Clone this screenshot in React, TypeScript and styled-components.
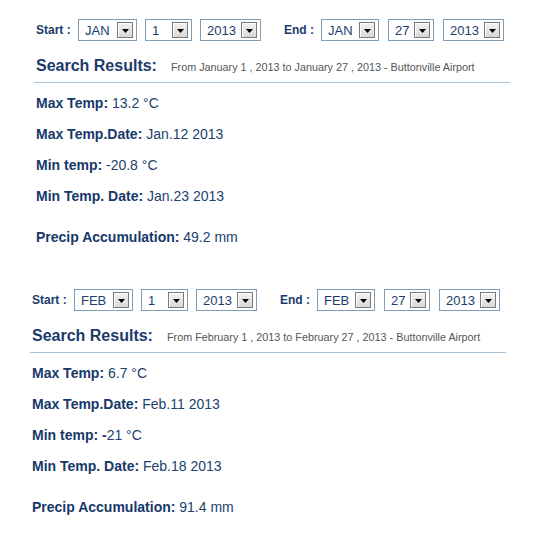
import React from "react";
import styled, { createGlobalStyle } from "styled-components";

const GlobalStyle = createGlobalStyle`
  html, body { margin: 0; padding: 0; background: #ffffff; }
  body { font-family: "Liberation Sans", Arial, Helvetica, sans-serif; }
`;

const Page = styled.div`
  padding-top: 19px;
  width: 534px;
  min-height: 544px;
  box-sizing: border-box;
`;

const Panel = styled.section<{ $left: number }>`
  margin-left: ${(p) => p.$left}px;
  & + & { margin-top: 43px; }
`;

const DateRow = styled.div`
  display: flex;
  align-items: center;
  height: 22px;
`;

const Group = styled.div<{ $gap: number; $ml?: number }>`
  display: flex;
  align-items: center;
  gap: ${(p) => p.$gap}px;
  margin-left: ${(p) => p.$ml ?? 0}px;
`;

const FieldLabel = styled.span<{ $w: number }>`
  width: ${(p) => p.$w}px;
  font-size: 12px;
  font-weight: bold;
  color: #1b3a6b;
  white-space: pre;
`;

const SelectBox = styled.div<{ $w: number }>`
  width: ${(p) => p.$w}px;
  height: 22px;
  box-sizing: border-box;
  border: 1px solid #7f9db9;
  display: flex;
  align-items: center;
  justify-content: space-between;
  padding: 0 3px 0 6px;
  font-size: 13px;
  color: #1c3d6d;
  background: #fff;
`;

const ArrowBtn = styled.span`
  width: 16px;
  height: 16px;
  box-sizing: border-box;
  border: 1px solid #7a7a7a;
  background: linear-gradient(#f2f2f2, #d9d9d9);
  box-shadow: inset 1px 1px 0 #ffffff;
  display: flex;
  align-items: center;
  justify-content: center;
  padding-top: 2px;
`;

const Header = styled.div`
  margin-top: 15px;
  margin-left: -2px;
  padding: 0 0 5px 2px;
  width: 476px;
  box-sizing: border-box;
  border-bottom: 1px solid #a9c1d5;
  display: flex;
  align-items: baseline;
  gap: 14px;
  line-height: 20px;
`;

const HeaderTitle = styled.span`
  font-size: 16px;
  font-weight: bold;
  color: #1b3a6b;
`;

const HeaderSub = styled.span`
  font-size: 10.8px;
  color: #555555;
`;

const ResultRow = styled.div<{ $mt: number }>`
  margin-top: ${(p) => p.$mt}px;
  font-size: 14px;
  line-height: 18px;
  color: #213f6d;
  white-space: pre;
`;

const Label = styled.b`
  color: #17386a;
`;

const Select = ({ value, w }: { value: string; w: number }) => (
  <SelectBox $w={w}>
    <span>{value}</span>
    <ArrowBtn>
      <svg width="7" height="4" viewBox="0 0 7 4">
        <polygon points="0,0 7,0 3.5,4" fill="#000" />
      </svg>
    </ArrowBtn>
  </SelectBox>
);

type Data = {
  left: number;
  month: string;
  endDay: string;
  from: string;
  rows: [string, string][];
  precip: string;
};

const panels: Data[] = [
  {
    left: 36,
    month: "JAN",
    endDay: "27",
    from: "From January 1 , 2013 to January 27 , 2013 - Buttonville Airport",
    rows: [
      ["Max Temp:", " 13.2 °C"],
      ["Max Temp.Date:", " Jan.12 2013"],
      ["Min temp:", " -20.8 °C"],
      ["Min Temp. Date:", " Jan.23 2013"],
    ],
    precip: " 49.2 mm",
  },
  {
    left: 32,
    month: "FEB",
    endDay: "27",
    from: "From February 1 , 2013 to February 27 , 2013 - Buttonville Airport",
    rows: [
      ["Max Temp:", " 6.7 °C"],
      ["Max Temp.Date:", " Feb.11 2013"],
      ["Min temp: -", "21 °C"],
      ["Min Temp. Date:", " Feb.18 2013"],
    ],
    precip: " 91.4 mm",
  },
];

export default function App() {
  return (
    <Page>
      <GlobalStyle />
      {panels.map((p) => (
        <Panel key={p.month} $left={p.left}>
          <DateRow>
            <Group $gap={8}>
              <FieldLabel $w={34}>Start :</FieldLabel>
              <Select value={p.month} w={59} />
              <Select value="1" w={47} />
              <Select value="2013" w={61} />
            </Group>
            <Group $gap={9} $ml={23}>
              <FieldLabel $w={28}>End :</FieldLabel>
              <Select value={p.month} w={58} />
              <Select value={p.endDay} w={46} />
              <Select value="2013" w={61} />
            </Group>
          </DateRow>
          <Header>
            <HeaderTitle>Search Results:</HeaderTitle>
            <HeaderSub>{p.from}</HeaderSub>
          </Header>
          {p.rows.map(([l, v], i) => (
            <ResultRow key={l} $mt={i === 0 ? 11 : 13}>
              <Label>{l}</Label>
              {v}
            </ResultRow>
          ))}
          <ResultRow $mt={23}>
            <Label>Precip Accumulation:</Label>
            {p.precip}
          </ResultRow>
        </Panel>
      ))}
    </Page>
  );
}
